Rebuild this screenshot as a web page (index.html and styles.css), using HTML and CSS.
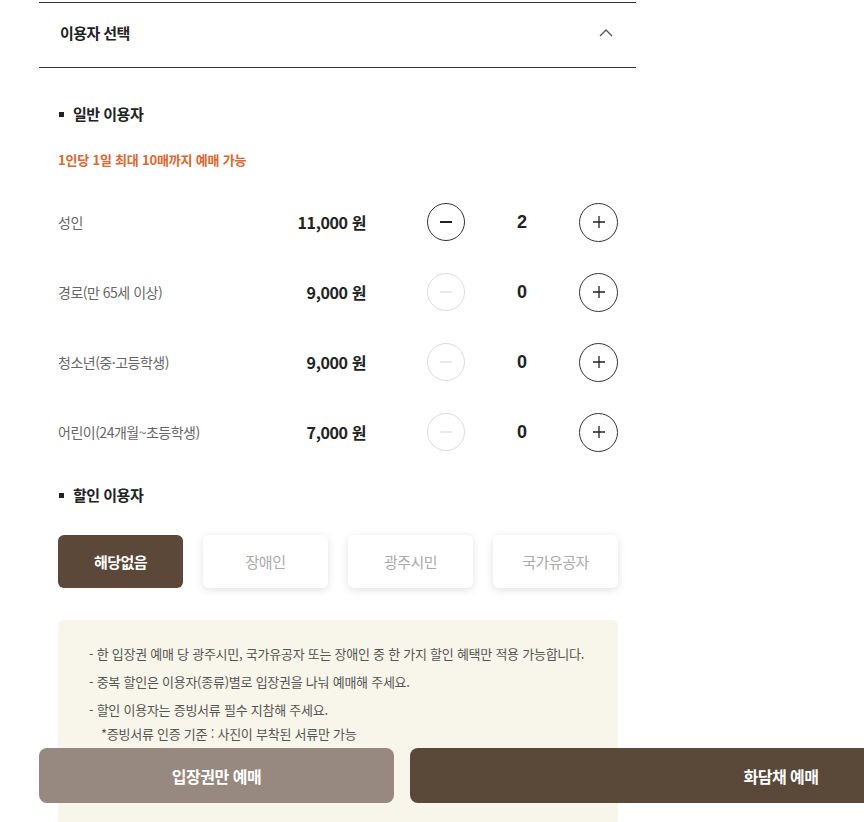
FILE: index.html
```html
<!DOCTYPE html>
<html lang="ko">
<head>
<meta charset="utf-8">
<title>이용자 선택</title>
<link rel="stylesheet" href="styles.css">
</head>
<body>
<div class="panel">
  <div class="panel-head">
    <span class="panel-title">이용자 선택</span>
    <svg class="chev" width="16" height="10" viewBox="0 0 16 10"><path d="M2 8 L8 2 L14 8" fill="none" stroke="#555" stroke-width="1.4"/></svg>
  </div>
  <div class="panel-body">
    <h3 class="sec-title">일반 이용자</h3>
    <p class="limit">1인당 1일 최대 10매까지 예매 가능</p>
    <div class="rows">
      <div class="row">
        <span class="lbl">성인</span>
        <span class="price">11,000 원</span>
        <button class="cnt on"><svg width="16" height="16" viewBox="0 0 16 16"><path d="M2 8 H14" stroke="#222" stroke-width="2"/></svg></button>
        <span class="num">2</span>
        <button class="cnt on"><svg width="16" height="16" viewBox="0 0 16 16"><path d="M2 8 H14 M8 2 V14" stroke="#222" stroke-width="1.3"/></svg></button>
      </div>
      <div class="row">
        <span class="lbl">경로(만 65세 이상)</span>
        <span class="price">9,000 원</span>
        <button class="cnt off"><svg width="16" height="16" viewBox="0 0 16 16"><path d="M2 8 H14" stroke="#ddd" stroke-width="1.3"/></svg></button>
        <span class="num">0</span>
        <button class="cnt on"><svg width="16" height="16" viewBox="0 0 16 16"><path d="M2 8 H14 M8 2 V14" stroke="#222" stroke-width="1.3"/></svg></button>
      </div>
      <div class="row">
        <span class="lbl">청소년(중·고등학생)</span>
        <span class="price">9,000 원</span>
        <button class="cnt off"><svg width="16" height="16" viewBox="0 0 16 16"><path d="M2 8 H14" stroke="#ddd" stroke-width="1.3"/></svg></button>
        <span class="num">0</span>
        <button class="cnt on"><svg width="16" height="16" viewBox="0 0 16 16"><path d="M2 8 H14 M8 2 V14" stroke="#222" stroke-width="1.3"/></svg></button>
      </div>
      <div class="row">
        <span class="lbl">어린이(24개월~초등학생)</span>
        <span class="price">7,000 원</span>
        <button class="cnt off"><svg width="16" height="16" viewBox="0 0 16 16"><path d="M2 8 H14" stroke="#ddd" stroke-width="1.3"/></svg></button>
        <span class="num">0</span>
        <button class="cnt on"><svg width="16" height="16" viewBox="0 0 16 16"><path d="M2 8 H14 M8 2 V14" stroke="#222" stroke-width="1.3"/></svg></button>
      </div>
    </div>
    <h3 class="sec-title sec-disc">할인 이용자</h3>
    <div class="chips">
      <button class="chip active">해당없음</button>
      <button class="chip">장애인</button>
      <button class="chip">광주시민</button>
      <button class="chip">국가유공자</button>
    </div>
    <div class="notice">
      <p class="n-line">- 한 입장권 예매 당 광주시민, 국가유공자 또는 장애인 중 한 가지 할인 혜택만 적용 가능합니다.</p>
      <p class="n-line">- 중복 할인은 이용자(종류)별로 입장권을 나눠 예매해 주세요.</p>
      <p class="n-line">- 할인 이용자는 증빙서류 필수 지참해 주세요.</p>
      <p class="n-sub">*증빙서류 인증 기준 : 사진이 부착된 서류만 가능</p>
    </div>
  </div>
</div>
<div class="bottom-bar">
  <button class="bb bb-ticket">입장권만 예매</button>
  <button class="bb bb-main">화담채 예매</button>
</div>
</body>
</html>
```
FILE: styles.css
```css
* { box-sizing: border-box; }
html, body { margin: 0; padding: 0; }
body {
  background: #fff;
  font-family: "Noto Sans CJK KR", "Noto Sans", sans-serif;
  color: #222;
  height: 822px;
  overflow: hidden;
  padding-top: 2px;
}
button { font-family: inherit; cursor: pointer; }
.panel {
  margin-left: 39px;
  width: 597px;
}
.panel-head {
  height: 66px;
  border-top: 1px solid #333;
  border-bottom: 1px solid #333;
  display: flex;
  align-items: center;
  justify-content: space-between;
  padding: 0 22px 5px 21px;
}
.panel-title {
  font-size: 15px;
  font-weight: 700;
  letter-spacing: -0.6px;
  color: #222;
}
.chev { display: block; }
.panel-body {
  padding: 35px 18px 0 19px;
}
.sec-title {
  margin: 0;
  font-size: 15px;
  line-height: 22px;
  font-weight: 700;
  letter-spacing: -0.5px;
  color: #222;
  display: flex;
  align-items: center;
}
.sec-title::before {
  content: "";
  width: 5px;
  height: 5px;
  background: #222;
  margin: 0 9px 0 1px;
}
.limit {
  margin: 25px 0 0;
  font-size: 13px;
  line-height: 20px;
  font-weight: 700;
  letter-spacing: -0.2px;
  color: #e0662d;
}
.rows { margin-top: 17px; }
.row {
  height: 70px;
  display: grid;
  grid-template-columns: 1fr auto 38px 114px 39px;
  align-items: center;
}
.lbl {
  font-size: 14px;
  color: #666;
  letter-spacing: -0.5px;
}
.price {
  font-size: 16px;
  font-weight: 700;
  color: #222;
  letter-spacing: -0.4px;
  margin-right: 61px;
}
.cnt {
  width: 38px;
  height: 38px;
  border-radius: 50%;
  background: #fff;
  padding: 0;
  display: flex;
  align-items: center;
  justify-content: center;
}
.cnt svg { display: block; }
.cnt.on { border: 1px solid #333; }
.cnt.off { border: 1px solid #ddd; }
.row .cnt:last-child { width: 39px; height: 39px; }
.num {
  text-align: center;
  font-size: 18px;
  font-weight: 700;
  color: #222;
  font-family: "Liberation Sans", Arial, sans-serif;
}
.sec-disc { margin-top: 17px; }
.chips {
  margin-top: 29px;
  display: grid;
  grid-template-columns: repeat(4, 1fr);
  gap: 20px;
}
.chip {
  height: 53px;
  border: none;
  border-radius: 6px;
  background: #fff;
  box-shadow: 0 2px 8px rgba(0, 0, 0, 0.12);
  font-size: 15px;
  color: #aaa;
  letter-spacing: -0.5px;
}
.chip.active {
  background: #5b4839;
  color: #fff;
  font-weight: 700;
  box-shadow: none;
}
.notice {
  margin-top: 32px;
  background: #f8f5ea;
  border-radius: 6px;
  padding: 20px 20px 120px 31px;
}
.notice p { margin: 0; }
.n-line {
  font-size: 13px;
  line-height: 28px;
  color: #555;
  letter-spacing: -0.25px;
}
.n-sub {
  font-size: 13px;
  line-height: 20px;
  color: #555;
  letter-spacing: -0.25px;
  padding-left: 12px;
}
.bottom-bar {
  position: fixed;
  left: 39px;
  bottom: 19px;
  display: flex;
  gap: 16px;
}
.bb {
  height: 55px;
  border: none;
  border-radius: 8px;
  color: #fff;
  font-size: 16px;
  font-weight: 700;
  letter-spacing: -0.5px;
}
.bb-ticket { width: 355px; background: #978880; }
.bb-main { width: 742px; background: #5a4839; }
```
